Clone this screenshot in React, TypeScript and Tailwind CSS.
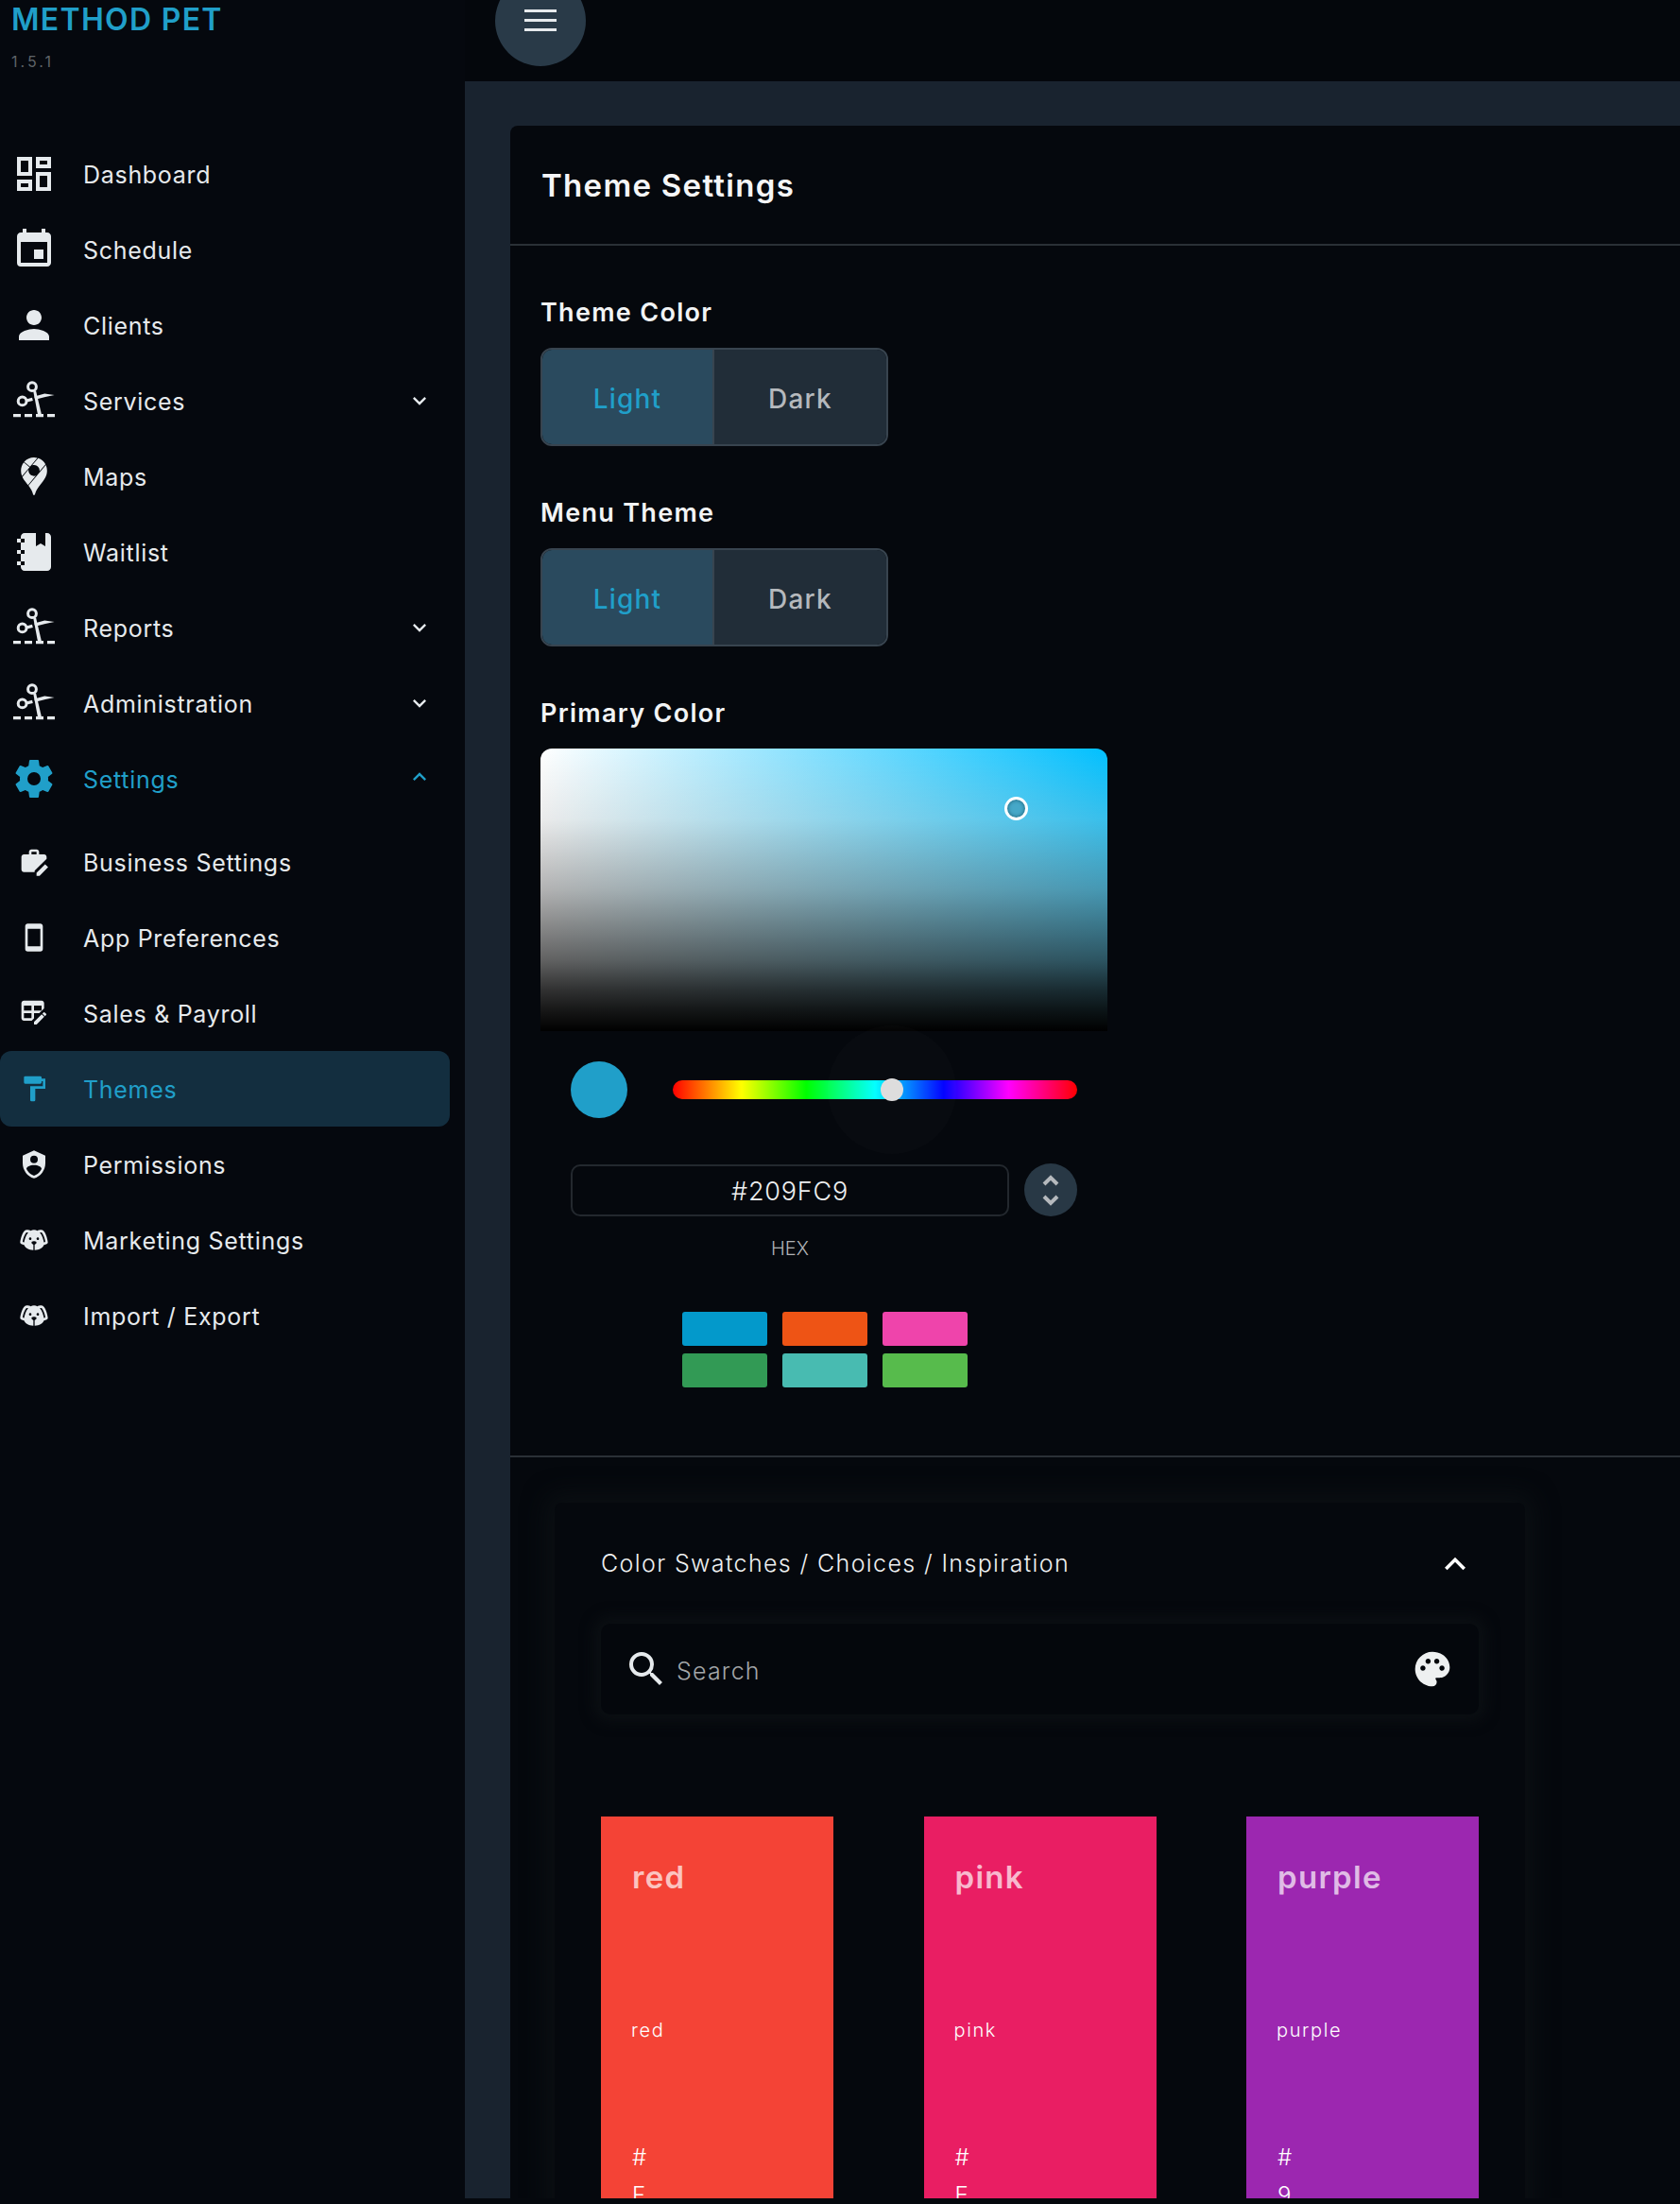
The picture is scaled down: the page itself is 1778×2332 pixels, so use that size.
import { ReactNode } from "react";
import {
  MdEvent,
  MdExpandLess,
  MdExpandMore,
  MdOutlineDashboard,
  MdPalette,
  MdPerson,
  MdSearch,
} from "react-icons/md";
import { SiGooglemaps } from "react-icons/si";

const Glyph = ({ d, size = 48 }: { d: string; size?: number }) => (
  <svg width={size} height={size} viewBox="0 0 24 24" fill="currentColor">
    <path d={d} />
  </svg>
);

// scissors over a dashed cut line
const Scissors = () => (
  <svg width={48} height={48} viewBox="0 0 24 24" fill="currentColor">
    <path d="M1 19H5V20.6H1ZM7 19H11V20.6H7ZM13 19H17V20.6H13ZM19 19H23V20.6H19Z" />
    <circle cx="11" cy="4.6" r="2.2" fill="none" stroke="currentColor" strokeWidth="1.5" />
    <circle cx="5.8" cy="12.2" r="2.2" fill="none" stroke="currentColor" strokeWidth="1.5" />
    <path d="M11.6 6.9L13 6.6L16 19.4H14Z" />
    <path d="M7.8 11.2L11 10.4L11.4 12L8.2 12.8Z" />
    <path d="M12.6 11.4L12.2 9.8L17.6 8.2L22.8 9L18 10Z" />
  </svg>
);

// heavier chevron used in the hex spinner
const SpinChevron = ({ d }: { d: string }) => (
  <svg width={20} height={14} viewBox="0 0 20 14" fill="none" stroke="currentColor" strokeWidth={4}>
    <path d={d} />
  </svg>
);

const BRIEFCASE =
  "M4 6H8V4C8 2.9 8.9 2 10 2H14C15.1 2 16 2.9 16 4V6H20C21.1 6 22 6.9 22 8V9.5L12.5 19V20H4C2.9 20 2 19.1 2 18V8C2 6.9 2.9 6 4 6ZM10 4V6H14V4ZM14 23V20.6L20.8 13.8L23.2 16.2L16.4 23Z";
const PHONE =
  "M17,19H7V5H17M17,1H7C5.89,1 5,1.89 5,3V21A2,2 0 0,0 7,23H17A2,2 0 0,0 19,21V3C19,1.89 18.1,1 17,1Z";
const TABLE_EDIT =
  "M21.7 13.35L20.7 14.35L18.65 12.35L19.65 11.35C19.85 11.14 20.19 11.14 20.4 11.35L21.7 12.65C21.91 12.86 21.91 13.19 21.7 13.35M12 18.94V21H14.06L20.12 14.88L18.07 12.88L12 18.94M4 2H18C19.1 2 20 2.9 20 4V8.17L16.17 12H12V16.17L10.17 18H4C2.9 18 2 17.1 2 16V4C2 2.9 2.9 2 4 2M4 6V10H10V6H4M12 6V10H18V6H12M4 12V16H10V12H4Z";
const PAINT =
  "M18,4V3A1,1 0 0,0 17,2H5A1,1 0 0,0 4,3V7A1,1 0 0,0 5,8H17A1,1 0 0,0 18,7V6H19V10H9V21A1,1 0 0,0 10,22H12A1,1 0 0,0 13,21V12H21V4H18Z";
const SHIELD =
  "M12,1L3,5V11C3,16.55 6.84,21.74 12,23C17.16,21.74 21,16.55 21,11V5L12,1M12,5A3,3 0 0,1 15,8A3,3 0 0,1 12,11A3,3 0 0,1 9,8A3,3 0 0,1 12,5M17.13,17C15.92,18.85 14.11,20.24 12,20.92C9.89,20.24 8.08,18.85 6.87,17C6.53,16.5 6.24,16 6,15.47C6,13.82 8.71,12.47 12,12.47C15.29,12.47 18,13.8 18,15.47C17.76,16 17.47,16.5 17.13,17Z";
const DOG =
  "M18,4C16.29,4 15.25,4.33 14.65,4.61C13.88,4.23 13,4 12,4C11,4 10.12,4.23 9.35,4.61C8.75,4.33 7.71,4 6,4C3,4 1,12 1,14C1,14.83 2.32,15.59 4.14,15.9C4.78,18.14 7.8,19.85 11.5,20V15.72C10.91,15.35 10,14.68 10,14C10,13 12,13 12,13C12,13 14,13 14,14C14,14.68 13.09,15.35 12.5,15.72V20C16.2,19.85 19.22,18.14 19.86,15.9C21.68,15.59 23,14.83 23,14C23,12 21,4 18,4M4.15,13.87C3.65,13.75 3.26,13.61 3,13.5C3.25,10.73 5.2,6.4 6.05,6C6.59,6 7,6.06 7.37,6.11C5.27,8.42 4.44,12.04 4.15,13.87M9,12A1,1 0 0,1 8,11C8,10.46 8.45,10 9,10A1,1 0 0,1 10,11C10,11.56 9.55,12 9,12M15,12A1,1 0 0,1 14,11C14,10.46 14.45,10 15,10A1,1 0 0,1 16,11C16,11.56 15.55,12 15,12M19.85,13.87C19.56,12.04 18.73,8.42 16.63,6.11C17,6.06 17.41,6 17.95,6C18.8,6.4 20.75,10.73 21,13.5C20.74,13.61 20.35,13.75 19.85,13.87Z";
const NOTEBOOK =
  "M3,7V5H5V4C5,2.89 5.9,2 7,2H13V9L15.5,7.5L18,9V2H19C20.05,2 21,2.95 21,4V20C21,21.05 20.05,22 19,22H7C5.95,22 5,21.05 5,20V19H3V17H5V13H3V11H5V7H3M7,11H5V13H7V11M7,7V5H5V7H7M7,19V17H5V19H7Z";
const COG =
  "M12,15.5A3.5,3.5 0 0,1 8.5,12A3.5,3.5 0 0,1 12,8.5A3.5,3.5 0 0,1 15.5,12A3.5,3.5 0 0,1 12,15.5M19.43,12.97C19.47,12.65 19.5,12.33 19.5,12C19.5,11.67 19.47,11.34 19.43,11L21.54,9.37C21.73,9.22 21.78,8.95 21.66,8.73L19.66,5.27C19.54,5.05 19.27,4.96 19.05,5.05L16.56,6.05C16.04,5.66 15.5,5.32 14.87,5.07L14.5,2.42C14.46,2.18 14.25,2 14,2H10C9.75,2 9.54,2.18 9.5,2.42L9.13,5.07C8.5,5.32 7.96,5.66 7.44,6.05L4.95,5.05C4.73,4.96 4.46,5.05 4.34,5.27L2.34,8.73C2.21,8.95 2.27,9.22 2.46,9.37L4.57,11C4.53,11.34 4.5,11.67 4.5,12C4.5,12.33 4.53,12.65 4.57,12.97L2.46,14.63C2.27,14.78 2.21,15.05 2.34,15.27L4.34,18.73C4.46,18.95 4.73,19.03 4.95,18.95L7.44,17.94C7.96,18.34 8.5,18.68 9.13,18.93L9.5,21.58C9.54,21.82 9.75,22 10,22H14C14.25,22 14.46,21.82 14.5,21.58L14.87,18.93C15.5,18.67 16.04,18.34 16.56,17.94L19.05,18.95C19.27,19.03 19.54,18.95 19.66,18.73L21.66,15.27C21.78,15.05 21.73,14.78 21.54,14.63L19.43,12.97Z";

interface NavEntry {
  label: string;
  icon: ReactNode;
  caret?: "down" | "up";
  active?: boolean;
}

const mainNav: NavEntry[] = [
  { label: "Dashboard", icon: <MdOutlineDashboard size={48} /> },
  { label: "Schedule", icon: <MdEvent size={48} /> },
  { label: "Clients", icon: <MdPerson size={48} /> },
  { label: "Services", icon: <Scissors />, caret: "down" },
  { label: "Maps", icon: <SiGooglemaps size={40} /> },
  { label: "Waitlist", icon: <Glyph d={NOTEBOOK} /> },
  { label: "Reports", icon: <Scissors />, caret: "down" },
  { label: "Administration", icon: <Scissors />, caret: "down" },
];

const subNav: NavEntry[] = [
  { label: "Business Settings", icon: <Glyph d={BRIEFCASE} size={32} /> },
  { label: "App Preferences", icon: <Glyph d={PHONE} size={32} /> },
  { label: "Sales & Payroll", icon: <Glyph d={TABLE_EDIT} size={32} /> },
  { label: "Themes", icon: <Glyph d={PAINT} size={32} />, active: true },
  { label: "Permissions", icon: <Glyph d={SHIELD} size={32} /> },
  { label: "Marketing Settings", icon: <Glyph d={DOG} size={32} /> },
  { label: "Import / Export", icon: <Glyph d={DOG} size={32} /> },
];

const presets = ["#0399cb", "#ee5415", "#ef44ab", "#329a55", "#48bbb1", "#57bb4c"];

const colorCards = [
  { name: "red", hex: "#F44336", bg: "bg-[#f44336]" },
  { name: "pink", hex: "#E91E63", bg: "bg-[#e91e63]" },
  { name: "purple", hex: "#9C27B0", bg: "bg-[#9c27b0]" },
];

const NavRow = ({ item }: { item: NavEntry }) => (
  <div
    className={`flex h-[80px] items-center rounded-[12px] mr-[16px] ${
      item.active ? "bg-[#132e3f] text-[#209fc9]" : "text-[#e6eaed]"
    }`}
  >
    <div className="flex w-[72px] shrink-0 justify-center">{item.icon}</div>
    <span className="ml-[16px] mt-[3px] text-[25px] tracking-[0.7px]">{item.label}</span>
    {item.caret === "down" && (
      <MdExpandMore size={28} className="ml-auto mr-[18px]" />
    )}
  </div>
);

const ThemeToggle = () => (
  <div className="flex h-[104px] w-[368px] overflow-hidden rounded-[12px] border-2 border-[#38444f] text-[28px] font-medium tracking-[1.2px]">
    <div className="flex w-[182px] items-center justify-center border-r-2 border-[#38444f] bg-[#2a4a5e] pt-[3px] text-[#209fc9]">
      Light
    </div>
    <div className="flex flex-1 items-center justify-center bg-[#212d38] pt-[3px] text-[#b5b9bd]">
      Dark
    </div>
  </div>
);

const Label = ({ children }: { children: ReactNode }) => (
  <div className="h-[40px] text-[27px] font-semibold leading-[43px] tracking-[1.3px] text-[#f2f4f5]">
    {children}
  </div>
);

const App = () => {
  return (
    <div className="flex h-[2332px] w-[1778px] overflow-hidden bg-[#05080d] [font-family:Inter,sans-serif]">
      {/* Sidebar */}
      <aside className="w-[492px] shrink-0 bg-[#05080e]">
        <div className="h-[144px] pl-[12px]">
          <div className="h-[40px] text-[32px] font-semibold leading-[42px] tracking-[1.3px] text-[#209fc9]">
            METHOD PET
          </div>
          <div className="mt-[5px] text-[16px] leading-[40px] tracking-[3px] text-[#5f6368]">
            1.5.1
          </div>
        </div>
        {mainNav.map((item) => (
          <NavRow key={item.label} item={item} />
        ))}
        <div className="mb-[8px] mr-[16px] flex h-[80px] items-center text-[#209fc9]">
          <div className="flex w-[72px] shrink-0 justify-center">
            <Glyph d={COG} />
          </div>
          <span className="ml-[16px] mt-[3px] text-[25px] tracking-[0.7px]">Settings</span>
          <MdExpandLess size={28} className="ml-auto mr-[18px] -mt-[4px]" />
        </div>
        {subNav.map((item) => (
          <NavRow key={item.label} item={item} />
        ))}
      </aside>

      {/* Main column */}
      <div className="flex min-w-0 flex-1 flex-col">
        <header className="h-[86px] shrink-0 overflow-hidden bg-[#04070c]">
          <div className="ml-[32px] -mt-[26px] flex h-[96px] w-[96px] items-center justify-center rounded-full bg-[#293a48]">
            <svg width={34} height={24} viewBox="0 0 34 24" fill="#e6eaed">
              <rect x="0" y="0" width="34" height="3" />
              <rect x="0" y="10" width="34" height="3" />
              <rect x="0" y="20" width="34" height="3" />
            </svg>
          </div>
        </header>

        <div className="min-h-0 flex-1 overflow-hidden bg-[#19232f] pl-[48px] pt-[47px]">
          <div className="h-[2300px] rounded-tl-lg bg-[#05080d] text-white">
            <div className="flex h-[127px] items-center border-b-2 border-[#2a3036] pl-[33px] pt-[2px] text-[33px] font-semibold tracking-[1.3px] text-[#f5f6f7]">
              Theme Settings
            </div>

            <div className="border-b-2 border-[#2a3036] pl-[32px] pt-[49px] pb-[72px]">
              <Label>Theme Color</Label>
              <div className="mt-[19px]">
                <ThemeToggle />
              </div>
              <div className="mt-[49px]">
                <Label>Menu Theme</Label>
              </div>
              <div className="mt-[19px]">
                <ThemeToggle />
              </div>
              <div className="mt-[49px]">
                <Label>Primary Color</Label>
              </div>

              {/* Colour picker */}
              <div className="relative mt-[19px] h-[299px] w-[600px] rounded-t-[12px] bg-[linear-gradient(to_top,#000_0%,rgba(0,0,0,0.9)_8%,rgba(0,0,0,0.8)_15%,rgba(0,0,0,0.62)_25%,rgba(0,0,0,0.3)_50%,rgba(0,0,0,0.08)_75%,transparent_100%),linear-gradient(to_bottom,transparent_0%,rgba(255,255,255,0.24)_25%,rgba(255,255,255,0.39)_50%,rgba(255,255,255,0.5)_100%),linear-gradient(to_right,#fff,#00c0ff)]">
                <div className="absolute left-[491px] top-[51px] h-[25px] w-[25px] rounded-full border-[3px] border-white bg-[#46a8c8] shadow-[inset_0_0_4px_#1a5a70]" />
              </div>
              <div className="mt-[32px] flex h-[60px] items-center pl-[32px]">
                <div className="h-[60px] w-[60px] rounded-full bg-[#209fc9]" />
                <div className="relative ml-[48px] h-[20px] w-[428px] rounded-full bg-[linear-gradient(to_right,#f00_0%,#ff0_17%,#0f0_33%,#0ff_50%,#00f_67%,#f0f_83%,#f00_100%)]">
                  <div className="absolute -top-[58px] left-[164px] h-[136px] w-[136px] rounded-full bg-white/[0.015]" />
                  <div className="absolute -top-[2px] left-[220px] h-[24px] w-[24px] rounded-full bg-[#dddddd]" />
                </div>
              </div>
              <div className="mt-[48px] flex items-center pl-[32px]">
                <div className="flex h-[55px] w-[464px] items-center justify-center rounded-[10px] border-2 border-[#23282e] pt-[4px] text-[27px] font-light tracking-[0.8px] text-[#eef0f1]">
                  #209FC9
                </div>
                <div className="ml-[16px] flex h-[56px] w-[56px] flex-col items-center justify-center gap-[7px] rounded-full bg-[#283845] text-[#b5b9bd]">
                  <SpinChevron d="M3 11L10 4L17 11" />
                  <SpinChevron d="M3 3L10 10L17 3" />
                </div>
              </div>
              <div className="mt-[19px] w-[528px] text-center text-[20px] font-light leading-[30px] text-[#b0b3b6]">
                HEX
              </div>
              <div className="ml-[150px] mt-[52px] grid w-[302px] grid-cols-3 gap-x-[16px] gap-y-[8px]">
                {presets.map((c) => (
                  <div
                    key={c}
                    className="h-[36px] rounded-[3px]"
                    style={{ backgroundColor: c }}
                  />
                ))}
              </div>
            </div>

            {/* Swatches */}
            <div className="ml-[47px] mt-[48px] h-[1000px] w-[1027px] rounded-t-lg bg-[#05080d] px-[49px] shadow-[0_0_24px_10px_#0b0f13]">
              <div className="flex h-[128px] items-center justify-between pt-[2px]">
                <span className="text-[25px] font-light tracking-[1.37px] text-[#eef0f1]">
                  Color Swatches / Choices / Inspiration
                </span>
                <MdExpandLess size={44} className="text-white mr-[3px]" />
              </div>
              <div className="flex h-[96px] items-center rounded-[10px] bg-[#04070c] pl-[24px] pr-[27px] shadow-[0_0_14px_8px_#0b0f13]">
                <MdSearch size={48} className="text-[#e6eaed]" />
                <span className="ml-[8px] mt-[6px] text-[25px] font-light tracking-[1.2px] text-[#a3a6a9]">
                  Search
                </span>
                <MdPalette size={44} className="ml-auto text-[#eef0f1]" />
              </div>
              <div className="mt-[108px] flex justify-between">
                {colorCards.map((card) => (
                  <div key={card.name} className={`h-[600px] w-[246px] pl-[33px] text-white ${card.bg}`}>
                    <div className="pt-[42px] text-[33px] font-semibold leading-[44px] tracking-[1.3px] text-white/70">
                      {card.name}
                    </div>
                    <div className="-ml-[1px] mt-[125px] text-[20px] font-light leading-[30px] tracking-[1.6px]">
                      {card.name}
                    </div>
                    <div className="mt-[100px] w-[22px] break-all text-[24px] font-light leading-[40px]">
                      {card.hex}
                    </div>
                  </div>
                ))}
              </div>
            </div>
          </div>
        </div>
        <div className="h-[6px] shrink-0 bg-[#05080d]" />
      </div>
    </div>
  );
};

export default App;
